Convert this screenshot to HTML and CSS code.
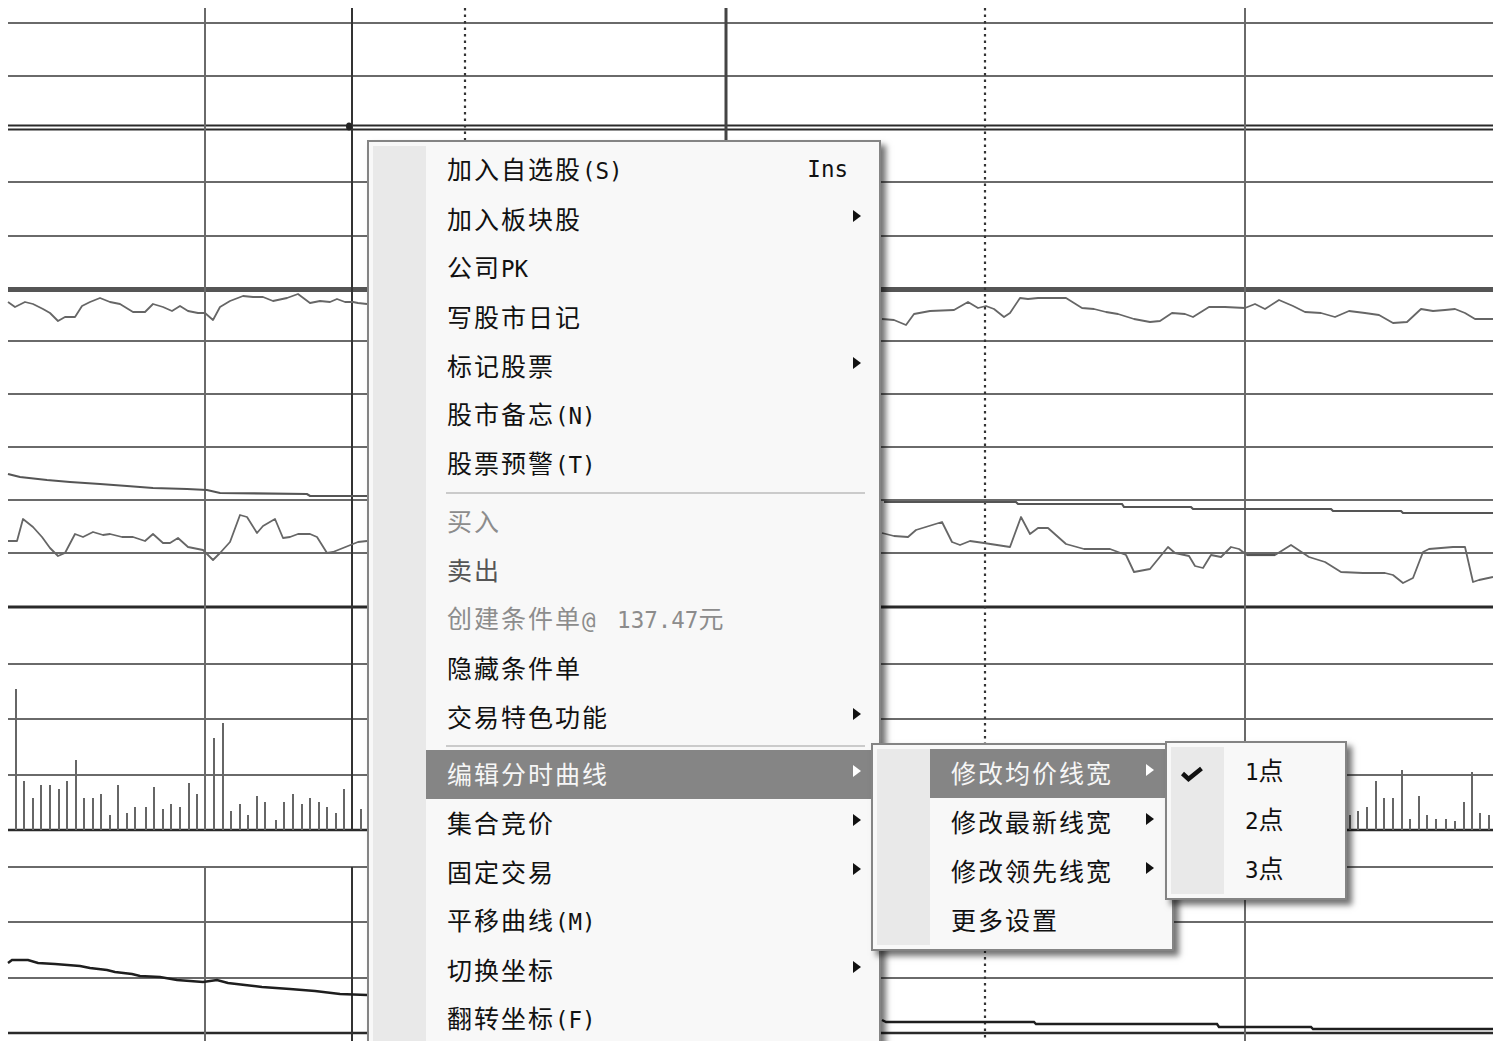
FILE: index.html
```html
<!DOCTYPE html>
<html lang="zh-CN">
<head>
<meta charset="utf-8">
<title>分时走势</title>
<link rel="stylesheet" href="styles.css">
</head>
<body>
<div class="screen">
  <svg class="chart" width="1493" height="1041" viewBox="0 0 1493 1041" xmlns="http://www.w3.org/2000/svg">
    <!-- horizontal grid -->
    <g class="grid">
      <path d="M8 23H1493M8 76H1493M8 182H1493M8 236H1493M8 341H1493M8 394H1493M8 447H1493M8 500H1493M8 553H1493M8 664H1493M8 719H1493M8 775H1493M8 867H1493M8 922H1493M8 978H1493"/>
    </g>
    <path class="frame-thin" d="M8 125.5H1493M8 129.5H1493"/>
    <path class="frame-thick" d="M8 289.5H1493"/>
    <path class="frame-dark" d="M8 607H1493"/>
    <path class="frame-base" d="M8 830H1493M8 1033H1493"/>
    <!-- vertical grid -->
    <path class="grid" d="M205 8V830M205 867V1041M1245 8V830M1245 867V1041"/>
    <path class="cross" d="M352 8V830M352 867V1041"/>
    <path class="mid" d="M726 8V830M726 867V1041"/>
    <path class="dots" d="M465 8V1041M985 8V1041"/>
    <ellipse class="pin" cx="349" cy="126.5" rx="3" ry="4"/>

    <!-- price curve -->
    <polyline class="price" points="8,302 15,307 25,302 33,304 43,309 50,313 58,321 65,317 75,317 82,306 90,302 100,298 110,302 120,304 133,312 145,312 153,304 163,307 172,311 180,306 188,311 198,313 205,313 213,320 220,307 230,301 243,296 253,297 263,297 273,301 287,298 298,294 310,303 320,301 330,302 337,299 345,302 353,302 358,303 367,304"/>
    <polyline class="price" points="882,319 894,320 906,325 914,314 930,311 954,310 968,302 978,308 986,306 994,309 1004,317 1010,313 1020,298 1028,299 1038,298 1066,298 1082,308 1094,309 1106,312 1118,314 1134,319 1150,322 1160,321 1172,313 1185,314 1193,317 1209,307 1225,307 1245,308 1255,304 1265,309 1279,300 1293,306 1305,312 1321,313 1335,317 1349,311 1365,313 1379,315 1393,323 1407,322 1421,309 1433,311 1445,310 1455,309 1465,313 1475,319 1493,319"/>

    <!-- lead line -->
    <polyline class="lead" points="8,474 20,477 47,480 70,482 100,484 127,486 153,488 187,489 207,490 220,493 307,494 310,496 367,496"/>
    <polyline class="lead" points="884,502 1016,502 1018,504 1122,504 1124,507 1191,507 1193,509 1331,509 1333,511 1401,511 1403,513 1493,513"/>

    <!-- indicator curve -->
    <polyline class="price" points="8,541 17,541 23,519 33,527 42,537 50,548 58,556 65,553 75,534 83,537 93,532 103,535 110,534 122,537 133,537 145,541 153,534 163,543 170,543 178,538 188,547 203,550 213,560 220,553 230,542 240,515 247,517 257,533 263,526 275,519 283,538 290,537 298,534 310,534 317,537 327,553 333,552 343,548 353,544 358,542 367,541"/>
    <polyline class="price" points="882,533 894,536 908,537 916,530 942,522 952,542 960,545 970,541 984,543 1010,547 1021,517 1030,534 1038,528 1048,528 1066,544 1084,549 1110,549 1126,555 1134,572 1150,569 1168,547 1175,553 1189,556 1195,566 1203,568 1211,555 1221,557 1231,547 1239,549 1247,555 1275,555 1291,545 1309,557 1325,562 1341,572 1363,573 1385,573 1393,575 1403,583 1413,578 1423,552 1429,549 1453,547 1465,547 1473,582 1479,580 1493,577"/>
    <path class="lead" d="M1247 555H1275"/>

    <!-- volume bars -->
    <path class="bars" d="M16 830V689M24 830V781M33 830V798M41 830V785M50 830V785M59 830V789M67 830V781M76 830V760M84 830V798M93 830V798M101 830V794M110 830V815M118 830V785M127 830V813M135 830V807M146 830V807M154 830V787M163 830V809M171 830V804M180 830V807M189 830V783M197 830V794M214 830V738M223 830V723M231 830V811M240 830V804M248 830V815M257 830V796M265 830V802M276 830V820M284 830V802M293 830V794M302 830V804M310 830V798M319 830V802M327 830V807M336 830V813M344 830V789M361 830V809"/>
    <path class="bars" d="M1350 830V815M1358 830V811M1367 830V807M1376 830V781M1384 830V798M1393 830V798M1402 830V770M1410 830V819M1419 830V796M1427 830V815M1436 830V819M1446 830V819M1455 830V821M1464 830V802M1472 830V772M1480 830V813M1489 830V815"/>

    <!-- lower panel -->
    <polyline class="low" points="8,963 12,960 28,960 38,963 55,964 80,966 90,968 107,970 115,972 132,974 140,976 160,977 177,980 203,982 217,980 228,983 245,985 262,987 290,989 315,991 340,994 367,995"/>
    <polyline class="low" points="882,1020 886,1022 1034,1022 1036,1024 1217,1024 1219,1027 1311,1027 1313,1029 1493,1029"/>
  </svg>

  <!-- context menu -->
  <div class="menu menu-main">
    <div class="item"><span class="icon"></span><span class="body"><span class="label">加入自选股<span class="en">(S)</span></span><span class="key en">Ins</span></span></div>
    <div class="item"><span class="icon"></span><span class="body"><span class="label">加入板块股</span><span class="arrow"></span></span></div>
    <div class="item"><span class="icon"></span><span class="body"><span class="label">公司<span class="en">PK</span></span></span></div>
    <div class="item"><span class="icon"></span><span class="body"><span class="label">写股市日记</span></span></div>
    <div class="item"><span class="icon"></span><span class="body"><span class="label">标记股票</span><span class="arrow"></span></span></div>
    <div class="item"><span class="icon"></span><span class="body"><span class="label">股市备忘<span class="en">(N)</span></span></span></div>
    <div class="item"><span class="icon"></span><span class="body"><span class="label">股票预警<span class="en">(T)</span></span></span></div>
    <div class="sep"></div>
    <div class="item disabled"><span class="icon"></span><span class="body"><span class="label">买入</span></span></div>
    <div class="item dim"><span class="icon"></span><span class="body"><span class="label">卖出</span></span></div>
    <div class="item disabled"><span class="icon"></span><span class="body"><span class="label">创建条件单<span class="en price-tag">@ 137.47</span>元</span></span></div>
    <div class="item"><span class="icon"></span><span class="body"><span class="label">隐藏条件单</span></span></div>
    <div class="item"><span class="icon"></span><span class="body"><span class="label">交易特色功能</span><span class="arrow"></span></span></div>
    <div class="sep"></div>
    <div class="item active"><span class="icon"></span><span class="body"><span class="label">编辑分时曲线</span><span class="arrow"></span></span></div>
    <div class="item"><span class="icon"></span><span class="body"><span class="label">集合竞价</span><span class="arrow"></span></span></div>
    <div class="item"><span class="icon"></span><span class="body"><span class="label">固定交易</span><span class="arrow"></span></span></div>
    <div class="item"><span class="icon"></span><span class="body"><span class="label">平移曲线<span class="en">(M)</span></span></span></div>
    <div class="item"><span class="icon"></span><span class="body"><span class="label">切换坐标</span><span class="arrow"></span></span></div>
    <div class="item"><span class="icon"></span><span class="body"><span class="label">翻转坐标<span class="en">(F)</span></span></span></div>
  </div>

  <div class="menu menu-curve">
    <div class="item active"><span class="icon"></span><span class="body"><span class="label">修改均价线宽</span><span class="arrow"></span></span></div>
    <div class="item"><span class="icon"></span><span class="body"><span class="label">修改最新线宽</span><span class="arrow"></span></span></div>
    <div class="item"><span class="icon"></span><span class="body"><span class="label">修改领先线宽</span><span class="arrow"></span></span></div>
    <div class="item"><span class="icon"></span><span class="body"><span class="label">更多设置</span></span></div>
  </div>

  <div class="menu menu-width">
    <div class="item"><span class="icon check"><svg width="24" height="16" viewBox="0 0 24 16"><polyline points="2.5,7.5 8.5,13 21.5,2.5"/></svg></span><span class="body"><span class="label"><span class="en">1</span>点</span></span></div>
    <div class="item"><span class="icon"></span><span class="body"><span class="label"><span class="en">2</span>点</span></span></div>
    <div class="item"><span class="icon"></span><span class="body"><span class="label"><span class="en">3</span>点</span></span></div>
  </div>
</div>
</body>
</html>
```

FILE: styles.css
```css
html, body {
  margin: 0;
  padding: 0;
  background: #ffffff;
}

.screen {
  position: relative;
  width: 1493px;
  height: 1041px;
  overflow: hidden;
  background: #ffffff;
  font-family: "Noto Sans CJK SC", "Noto Sans", sans-serif;
}

.chart {
  display: block;
}

/* chart strokes */
.grid path,
path.grid {
  stroke: #6a6a6a;
  stroke-width: 2;
  fill: none;
}
.frame-thin {
  stroke: #2a2a2a;
  stroke-width: 1.8;
  fill: none;
}
.frame-thick {
  stroke: #555;
  stroke-width: 5;
  fill: none;
}
.frame-dark {
  stroke: #2a2a2a;
  stroke-width: 3;
  fill: none;
}
.frame-base {
  stroke: #2a2a2a;
  stroke-width: 2.4;
  fill: none;
}
.cross {
  stroke: #333;
  stroke-width: 2;
  fill: none;
}
.mid {
  stroke: #444;
  stroke-width: 3;
  fill: none;
}
.dots {
  stroke: #333;
  stroke-width: 2.2;
  stroke-dasharray: 2.5 4;
  fill: none;
}
.pin {
  fill: #222;
}
.price {
  stroke: #666;
  stroke-width: 1.8;
  fill: none;
  stroke-linejoin: round;
}
.lead {
  stroke: #555;
  stroke-width: 2.2;
  fill: none;
}
.bars {
  stroke: #666;
  stroke-width: 2;
  fill: none;
}
.low {
  stroke: #1e1e1e;
  stroke-width: 2.4;
  fill: none;
}

/* popup menus */
.menu {
  position: absolute;
  box-sizing: border-box;
  border: 2px solid #848484;
  padding: 4px;
  background:
    linear-gradient(#e9e9e9, #e9e9e9) content-box 0 0 / 53px 100% no-repeat,
    #f8f8f8;
  box-shadow: 5px 5px 6px rgba(0, 0, 0, 0.55);
}

.menu-main {
  left: 367px;
  top: 140px;
  width: 514px;
  z-index: 1;
}

.menu-curve {
  left: 871px;
  top: 743px;
  width: 303px;
  z-index: 2;
}

.menu-width {
  left: 1165px;
  top: 741px;
  width: 182px;
  z-index: 3;
}

.item {
  display: flex;
  height: 49px;
  font-size: 25px;
  letter-spacing: 2px;
  color: #111;
}

.item .icon {
  flex: none;
  width: 53px;
  display: flex;
  align-items: center;
}

.item .body {
  flex: 1;
  min-width: 0;
  display: flex;
  align-items: center;
  padding: 0 14px 3px 21px;
}

.item.active .body {
  background: #858585;
  color: #f6f6f6;
}

.item.disabled {
  color: #8c8c8c;
}

.item.dim {
  color: #555;
}

.label {
  white-space: nowrap;
  line-height: 1;
}

.en {
  font-family: "DejaVu Sans Mono", "Liberation Mono", monospace;
  font-size: 22.5px;
  letter-spacing: 0;
}

.price-tag {
  word-spacing: 8px;
}

.key {
  margin-left: auto;
  margin-right: 13px;
  line-height: 1;
}

.arrow {
  margin-left: auto;
  width: 0;
  height: 0;
  border-left: 8px solid #111;
  border-top: 6.5px solid transparent;
  border-bottom: 6.5px solid transparent;
  transform: translateY(-2px);
}

.item.active .arrow {
  border-left-color: #ffffff;
}

.sep {
  height: 8px;
  margin: 0 10px 0 73px;
  display: flex;
  align-items: center;
}

.sep::before {
  content: "";
  flex: 1;
  height: 2px;
  background: #cbcbcb;
}

.check {
  padding-left: 9px;
  box-sizing: border-box;
}

.check svg {
  display: block;
  transform: translateY(2px);
}

.check polyline {
  fill: none;
  stroke: #111;
  stroke-width: 4.5;
  stroke-linejoin: miter;
}
```
